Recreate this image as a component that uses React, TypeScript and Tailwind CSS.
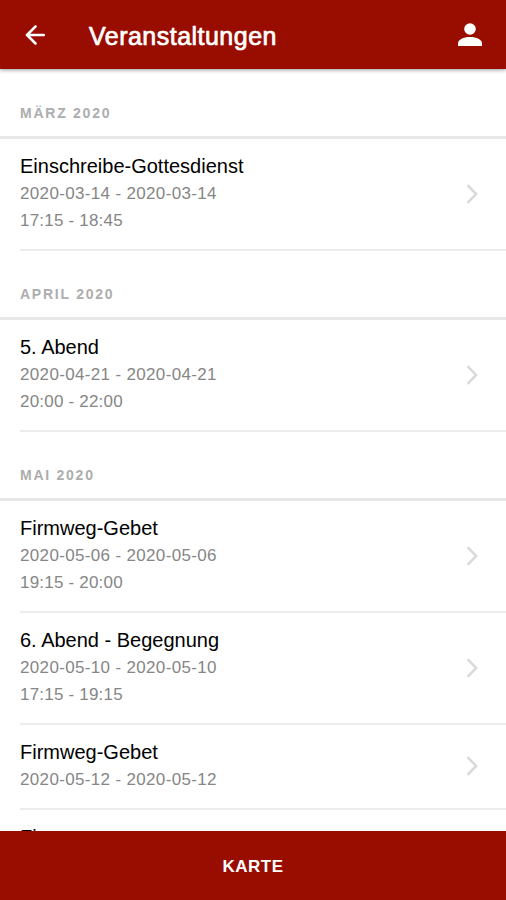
interface EventItem {
  title: string;
  date?: string;
  time?: string;
}

interface Section {
  month: string;
  events: EventItem[];
}

const sections: Section[] = [
  {
    month: "MÄRZ 2020",
    events: [{ title: "Einschreibe-Gottesdienst", date: "2020-03-14 - 2020-03-14", time: "17:15 - 18:45" }],
  },
  {
    month: "APRIL 2020",
    events: [{ title: "5. Abend", date: "2020-04-21 - 2020-04-21", time: "20:00 - 22:00" }],
  },
  {
    month: "MAI 2020",
    events: [
      { title: "Firmweg-Gebet", date: "2020-05-06 - 2020-05-06", time: "19:15 - 20:00" },
      { title: "6. Abend - Begegnung", date: "2020-05-10 - 2020-05-10", time: "17:15 - 19:15" },
      { title: "Firmweg-Gebet", date: "2020-05-12 - 2020-05-12" },
      { title: "Firmung" },
    ],
  },
];

function EventRow({ event }: { event: EventItem }) {
  return (
    <li className="pl-5">
      <div className="flex items-center justify-between pr-7 pt-3.5 pb-[15px] border-b-2 border-[#ececec]">
        <div>
          <h3 className="text-[20px] leading-[27px] text-black">{event.title}</h3>
          {event.date && <p className="text-[17px] leading-[27px] tracking-[0.34px] text-[#868686]">{event.date}</p>}
          {event.time && <p className="text-[17px] leading-[27px] tracking-[0.2px] text-[#868686]">{event.time}</p>}
        </div>
        {event.date && (
          <svg className="w-3 h-5 mt-px" viewBox="0 0 12 20" fill="none" stroke="#dadada" strokeWidth={2.5}>
            <path d="M1.5 1.2L10.2 10L1.5 18.8" />
          </svg>
        )}
      </div>
    </li>
  );
}

export default function App() {
  return (
    <div className="h-[900px] w-full flex flex-col overflow-hidden bg-white font-['Liberation_Sans',Arial,sans-serif]">
      <header className="h-[69px] shrink-0 flex items-center bg-[#990d00] pl-[25px] pr-6 pt-0.5 text-white shadow-[0_1px_4px_rgba(0,0,0,0.4)] z-10">
        <svg className="w-5 h-5 mb-0.5" viewBox="0 0 20 20" fill="none" stroke="currentColor" strokeWidth={2.5} strokeLinecap="round" strokeLinejoin="round">
          <path d="M10.5 1.5L2 10l8.5 8.5M2 10h17" />
        </svg>
        <h1 className="ml-11 grow text-[25px] leading-7 tracking-[0.48px] [-webkit-text-stroke:0.7px_white]">Veranstaltungen</h1>
        <svg className="w-6 h-[23px] mb-0.5" viewBox="0 0 24 23" fill="currentColor">
          <circle cx="12" cy="6" r="5.8" />
          <path d="M0 23v-2.5C0 16.5 5.5 14 12 14s12 2.5 12 6.5V23z" />
        </svg>
      </header>

      <main className="grow min-h-0 overflow-hidden pt-[0.5px]">
        {sections.map((section) => (
          <section key={section.month}>
            <h2 className="h-[69px] flex items-end border-b-[3px] border-[#e7e7e7] pl-5 pb-[13.5px] text-[14px] leading-[18px] font-bold tracking-[1.75px] text-[#adadad]">
              {section.month}
            </h2>
            <ul>
              {section.events.map((event, i) => (
                <EventRow key={i} event={event} />
              ))}
            </ul>
          </section>
        ))}
      </main>

      <button className="h-[69px] shrink-0 bg-[#990d00] pt-[3px] text-[17px] font-bold tracking-[0.5px] text-white">KARTE</button>
    </div>
  );
}
